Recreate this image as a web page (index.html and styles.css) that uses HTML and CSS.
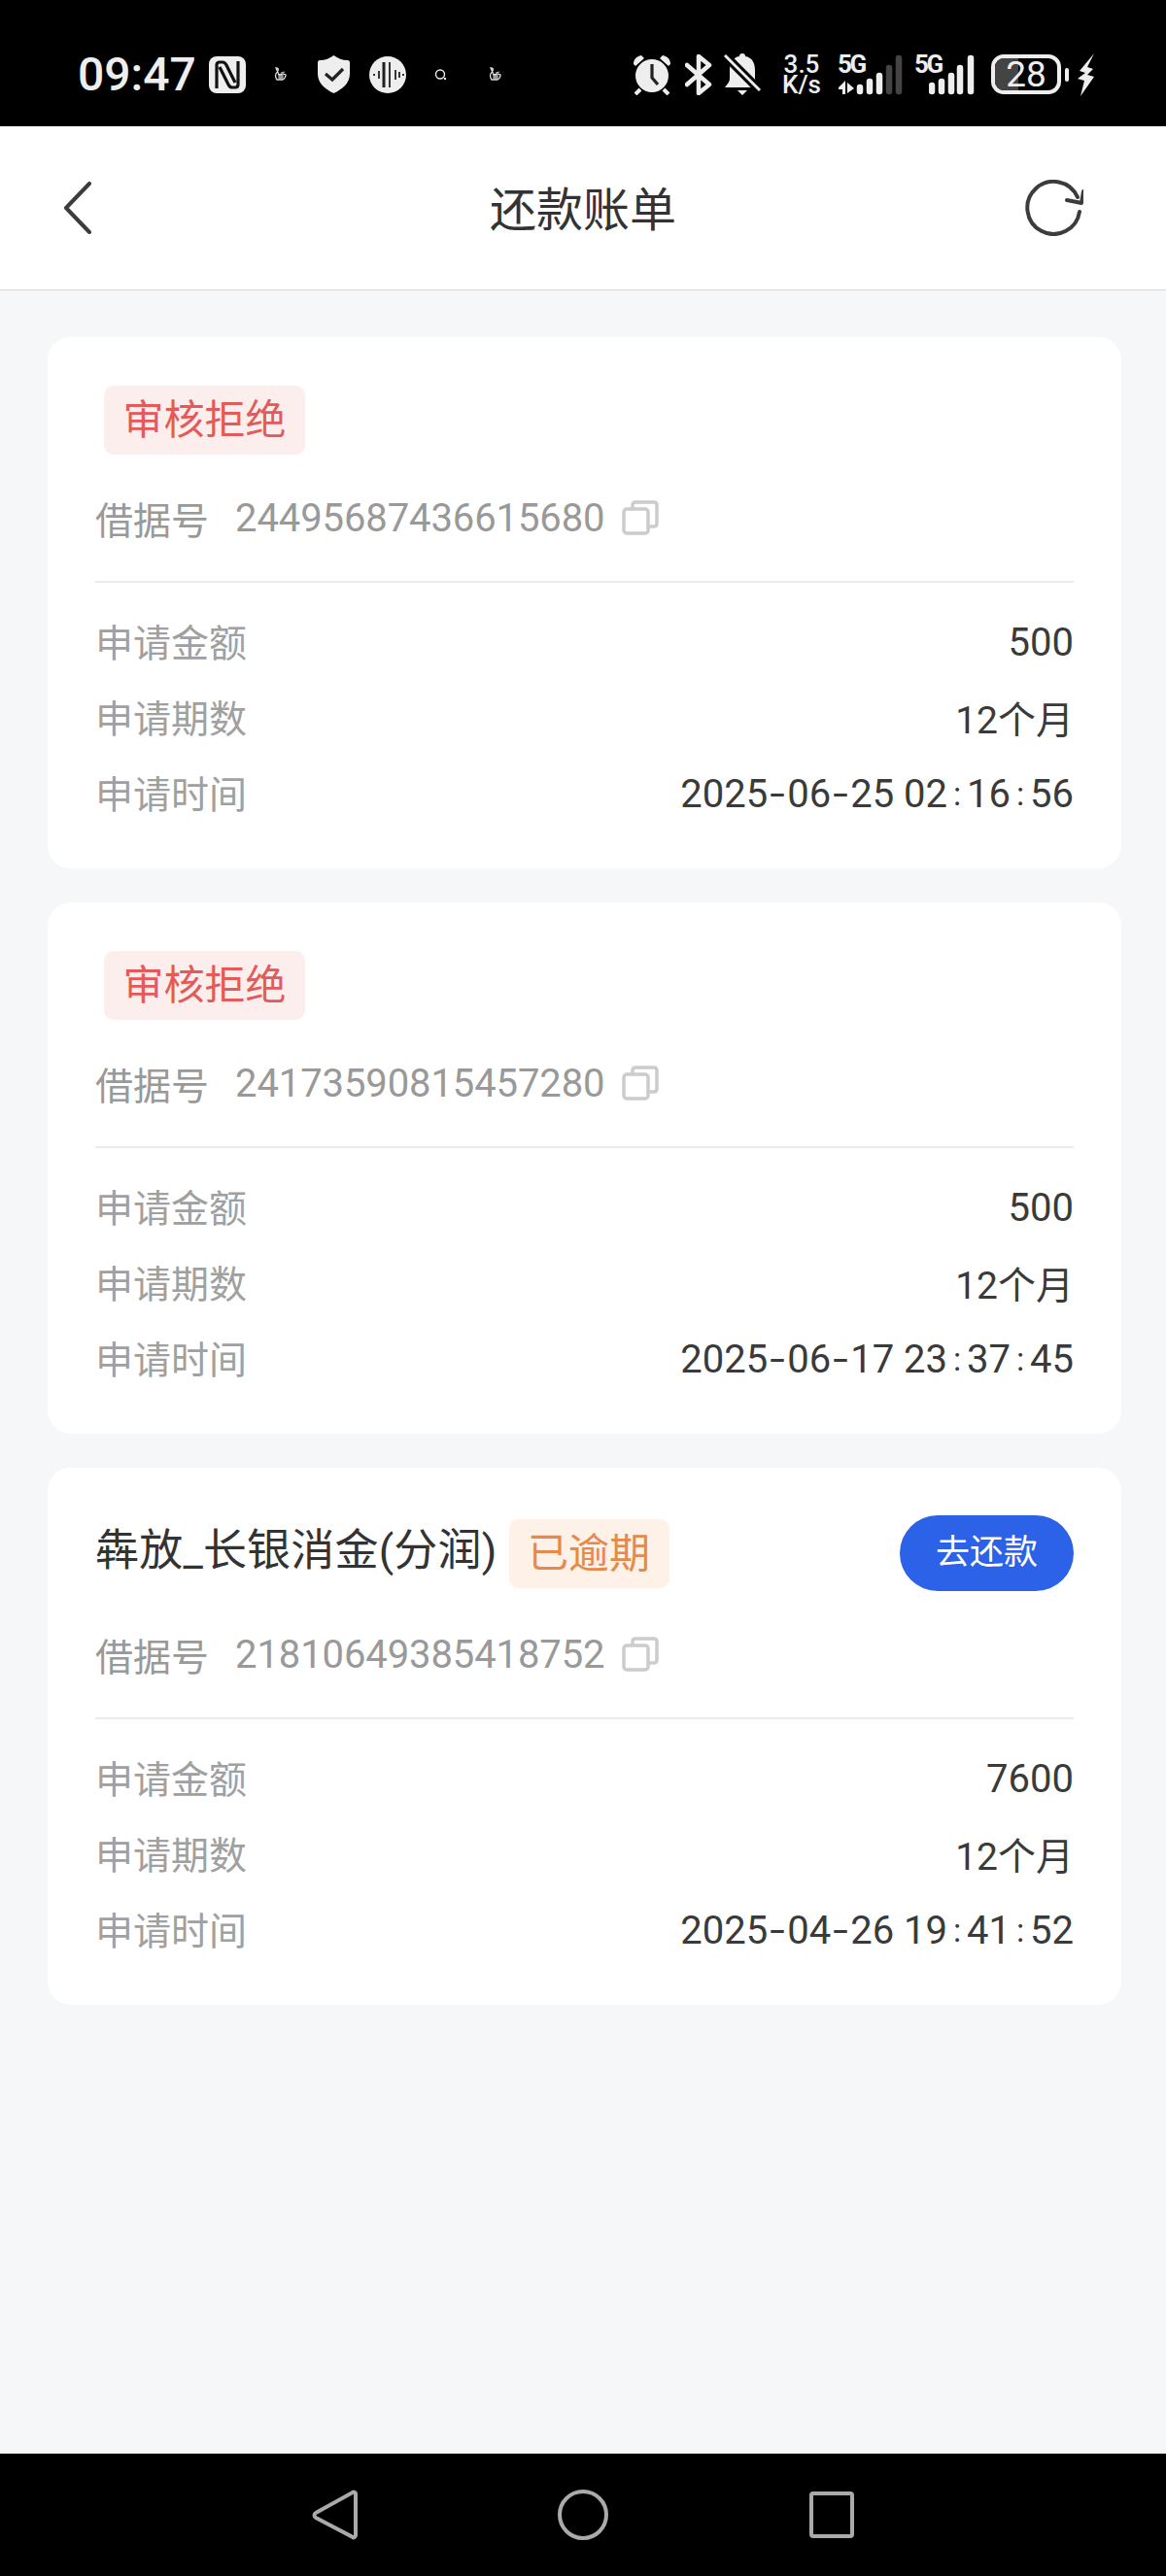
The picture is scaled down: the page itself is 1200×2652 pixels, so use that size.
FILE: index.html
```html
<!DOCTYPE html>
<html lang="zh-CN">

<head>
	<meta charset="UTF-8">
	<meta name="viewport" content="width=device-width, initial-scale=1.0">
	<title>还款账单</title>
	<link rel="stylesheet" href="styles.css">
</head>

<body>
	<div id="statusbar">
		<div class="status-left">
			<span class="clock">09:47</span>
			<svg class="ic-nfc" width="38" height="38" viewBox="0 0 38 38"><rect width="38" height="38" rx="8" fill="#eee"/><path d="M8 33V9c0-2 1-3 3-3h3c2 0 3 1 4 3l9 18M30 5v24c0 2-1 3-3 3h-3c-2 0-3-1-4-3L11 11" stroke="#111" stroke-width="3.200" fill="none"/></svg>
			<svg class="ic-tiny-a" width="15" height="16" viewBox="0 0 15 16"><path d="M3 1c2 0 3 1 2 3L3 7c-1 2 0 5 1 6h6c2-1 3-3 3-5l-3-1-4 1z" fill="none" stroke="#ddd" stroke-width="1.300"/><path d="M5 9h6M5 11h6M7 8v5M9 8v5M8 6l4-1" stroke="#ddd" stroke-width=".9"/></svg>
			<svg class="ic-shield" width="33" height="39" viewBox="0 0 33 39"><path d="M16.500 0c4 3 9 5 14 5 2 0 2.500 1 2.500 3v11c0 10-8 16-16.500 20C8 35 0 29 0 19V8c0-2 .5-3 2.500-3 5 0 10-2 14-5z" fill="#eee"/><path d="M8 19l7 6 11-11" stroke="#222" stroke-width="3.200" fill="none"/></svg>
			<svg class="ic-wave" width="38" height="38" viewBox="0 0 38 38"><circle cx="19" cy="19" r="19" fill="#eee"/><path d="M5 18v2M10 15v8M21 6v26M27 14v10M31 16v6M35 18v2" stroke="#222" stroke-width="1.800" fill="none"/><path d="M15 6v26" stroke="#222" stroke-width="3" fill="none"/></svg>
			<svg class="ic-tiny-b" width="13" height="12" viewBox="0 0 13 12"><circle cx="6" cy="5.500" r="4.500" fill="none" stroke="#eee" stroke-width="1.400"/><circle cx="11" cy="10" r="1.200" fill="#eee"/></svg>
			<svg class="ic-tiny-c" width="15" height="16" viewBox="0 0 15 16"><path d="M3 1c2 0 3 1 2 3L3 7c-1 2 0 5 1 6h6c2-1 3-3 3-5l-3-1-4 1z" fill="none" stroke="#ddd" stroke-width="1.300"/><path d="M5 9h6M5 11h6M7 8v5M9 8v5M8 6l4-1" stroke="#ddd" stroke-width=".9"/></svg>
		</div>
		<div class="status-right">
			<svg class="ic-alarm" width="40" height="42" viewBox="0 0 40 42"><circle cx="20" cy="22" r="17" fill="#eee"/><path d="M1 10C1 5 4 2 9 1l3 3-9 8zM39 10c0-5-3-8-8-9l-3 3 9 8z" fill="#eee"/><path d="M8 36l-5 5M32 36l5 5" stroke="#eee" stroke-width="4" fill="none"/><path d="M20 10v14l6 7" stroke="#222" stroke-width="3.200" fill="none"/></svg>
			<svg class="ic-bt" width="28" height="42" viewBox="0 0 28 42"><path d="M2 11l23 20-11 9V2l11 9L2 31" stroke="#eee" stroke-width="4.500" fill="none" stroke-linejoin="round" stroke-linecap="round"/></svg>
			<svg class="ic-bell" width="38" height="44" viewBox="0 0 38 44"><path d="M19 0c2 0 3 1 3 3 7 1 10 7 10 14v9c0 3 2 5 5 9H1c3-4 5-6 5-9V17C6 10 9 4 16 3c0-2 1-3 3-3zM14 38h10l-5 5z" fill="#eee"/><path d="M1 2l36 36" stroke="#000" stroke-width="9"/><path d="M1 2l36 36" stroke="#eee" stroke-width="3"/></svg>
			<div class="speed"><span>3.5</span><span>K/s</span></div>
			<div class="net">
				<span class="net-label">5G</span>
				<svg width="67" height="42" viewBox="0 0 67 42"><path d="M8 27v14H5v-5H1v-2zM10 29l7 6-7 5z" fill="#eee"/><path d="M23 34v4M33 28v10M43 22v16" stroke="#eee" stroke-width="6.500" stroke-linecap="round"/><path d="M53 14v24M63 4v34" stroke="#444" stroke-width="6.500" stroke-linecap="round"/></svg>
			</div>
			<div class="net net-b">
				<span class="net-label">5G</span>
				<svg width="47" height="42" viewBox="0 0 47 42"><path d="M3 32v6M13 28v10M23 22v16M32 14v24M43 4v34" stroke="#eee" stroke-width="6.500" stroke-linecap="round"/></svg>
			</div>
			<div class="battery"><span class="battery-fill"></span><span class="battery-num">28</span></div>
			<span class="battery-tip"></span>
			<svg class="ic-bolt" width="19" height="44" viewBox="0 0 19 44"><path d="M18 0 3 18l6 2-8 6 7 2-4 16 14-20-7-2 6-6-6-2z" fill="#eee"/></svg>
		</div>
	</div>

	<header id="topbar">
		<svg width="30" height="54" viewBox="0 0 30 54"><path d="M27 2 3 27l24 25" stroke="#3c3c3c" stroke-width="4" fill="none" stroke-linecap="round" stroke-linejoin="round"/></svg>
		<h1>还款账单</h1>
		<svg class="refresh" width="60" height="58" viewBox="0 0 60 58"><path d="M56 33A27 27 0 1 1 54 18" stroke="#3c3c3c" stroke-width="4" fill="none" stroke-linecap="round"/><path d="M60 12 58 24 43 21" stroke="#3c3c3c" stroke-width="4" fill="none" stroke-linecap="round" stroke-linejoin="round"/></svg>
	</header>

	<main>
		<section class="card">
			<div class="card-head"><span class="tag tag-red">审核拒绝</span></div>
			<div class="loan-no">
				<span class="loan-label">借据号</span>
				<span class="loan-num">24495687436615680</span>
				<svg width="38" height="36" viewBox="0 0 38 36"><rect x="2" y="9" width="25" height="25" rx="3" fill="#fff" stroke="#ccc" stroke-width="3.500"/><path d="M11 9V5c0-2 1-3 3-3h19c2 0 3 1 3 3v19c0 2-1 3-3 3h-6" fill="none" stroke="#ccc" stroke-width="3.500"/></svg>
			</div>
			<div class="rows">
				<div class="row"><span>申请金额</span><b>500</b></div>
				<div class="row"><span>申请期数</span><b class="term">12个月</b></div>
				<div class="row"><span>申请时间</span><b>2025<i class="dash">-</i>06<i class="dash">-</i>25 02<i class="colon">:</i>16<i class="colon">:</i>56</b></div>
			</div>
		</section>

		<section class="card">
			<div class="card-head"><span class="tag tag-red">审核拒绝</span></div>
			<div class="loan-no">
				<span class="loan-label">借据号</span>
				<span class="loan-num">24173590815457280</span>
				<svg width="38" height="36" viewBox="0 0 38 36"><rect x="2" y="9" width="25" height="25" rx="3" fill="#fff" stroke="#ccc" stroke-width="3.500"/><path d="M11 9V5c0-2 1-3 3-3h19c2 0 3 1 3 3v19c0 2-1 3-3 3h-6" fill="none" stroke="#ccc" stroke-width="3.500"/></svg>
			</div>
			<div class="rows">
				<div class="row"><span>申请金额</span><b>500</b></div>
				<div class="row"><span>申请期数</span><b class="term">12个月</b></div>
				<div class="row"><span>申请时间</span><b>2025<i class="dash">-</i>06<i class="dash">-</i>17 23<i class="colon">:</i>37<i class="colon">:</i>45</b></div>
			</div>
		</section>

		<section class="card card-due">
			<div class="card-head">
				<span class="card-title">犇放_长银消金(分润)</span>
				<span class="tag tag-orange">已逾期</span>
				<span class="pay-btn">去还款</span>
			</div>
			<div class="loan-no">
				<span class="loan-label">借据号</span>
				<span class="loan-num">21810649385418752</span>
				<svg width="38" height="36" viewBox="0 0 38 36"><rect x="2" y="9" width="25" height="25" rx="3" fill="#fff" stroke="#ccc" stroke-width="3.500"/><path d="M11 9V5c0-2 1-3 3-3h19c2 0 3 1 3 3v19c0 2-1 3-3 3h-6" fill="none" stroke="#ccc" stroke-width="3.500"/></svg>
			</div>
			<div class="rows">
				<div class="row"><span>申请金额</span><b>7600</b></div>
				<div class="row"><span>申请期数</span><b class="term">12个月</b></div>
				<div class="row"><span>申请时间</span><b>2025<i class="dash">-</i>04<i class="dash">-</i>26 19<i class="colon">:</i>41<i class="colon">:</i>52</b></div>
			</div>
		</section>
	</main>

	<nav id="navbar">
		<svg width="52" height="52" viewBox="0 0 52 52"><path d="M44 3c1-1 3 0 3 1v43c0 2-2 3-3 2L6 29c-2-1-2-4 0-5z" fill="none" stroke="#aaa" stroke-width="4"/></svg>
		<svg width="52" height="52" viewBox="0 0 52 52"><circle cx="26" cy="26" r="24" fill="none" stroke="#aaa" stroke-width="4"/></svg>
		<svg class="nav-square" width="46" height="48" viewBox="0 0 46 48"><rect x="2" y="2" width="42" height="44" rx="2" fill="none" stroke="#aaa" stroke-width="4"/></svg>
	</nav>
</body>

</html>
```

FILE: styles.css
```css
* {
	margin: 0;
	padding: 0;
	box-sizing: border-box;
}

body {
	width: 1200px;
	height: 2652px;
	display: flex;
	flex-direction: column;
	background-color: #f6f7f9;
	font-family: "Roboto", "Noto Sans CJK SC", sans-serif;
	overflow: hidden;
}

/* status bar */
#statusbar {
	height: 130px;
	flex: none;
	background-color: #000;
	color: #eee;
	display: flex;
	justify-content: space-between;
	align-items: center;
	padding: 23px 73px 0 80px;
}

.status-left,
.status-right {
	display: flex;
	align-items: center;
}

.clock {
	font-size: 48px;
	font-weight: 500;
	line-height: 40px;
}

.ic-nfc { margin-left: 13px; }
.ic-tiny-a { margin-left: 28px; }
.ic-shield { margin-left: 31px; }
.ic-wave { margin-left: 20px; }
.ic-tiny-b { margin-left: 29px; }
.ic-tiny-c { margin-left: 42px; }

.ic-bt { margin-left: 14px; }
.ic-bell { margin-left: 12px; }

.speed {
	margin-left: 21px;
	width: 42px;
	display: flex;
	flex-direction: column;
	align-items: center;
	font-size: 26px;
	font-weight: 500;
}

.speed span {
	display: block;
	height: 21px;
	line-height: 21px;
}

.net {
	margin-left: 16px;
	position: relative;
	width: 67px;
	height: 42px;
}

.net-b {
	margin-left: 12px;
	width: 62px;
}

.net svg {
	position: absolute;
	right: 0;
	top: 0;
}

.net-label {
	position: absolute;
	left: 0;
	top: 0;
	font-size: 26px;
	font-weight: 700;
	line-height: 20px;
	letter-spacing: -2.500px;
}

.battery {
	margin-left: 17px;
	width: 72px;
	height: 41px;
	border: 4px solid #eee;
	border-radius: 13px;
	position: relative;
	overflow: hidden;
}

.battery-fill {
	display: block;
	height: 100%;
	width: 24px;
	background-color: #444;
}

.battery-num {
	position: absolute;
	left: 0;
	right: 0;
	top: 0;
	text-align: center;
	font-size: 37px;
	line-height: 34px;
}

.battery-tip {
	margin-left: 4px;
	width: 4px;
	height: 14px;
	border-radius: 2px;
	background-color: #eee;
}

.ic-bolt { margin-left: 8px; }

/* top bar */
#topbar {
	height: 169px;
	flex: none;
	background-color: #fff;
	border-bottom: 1px solid #d8d8d8;
	display: grid;
	grid-template-columns: 1fr auto 1fr;
	align-items: center;
	padding: 0 65px;
}

#topbar h1 {
	font-size: 48px;
	font-weight: 400;
	color: #333;
	margin-bottom: 5px;
}

.refresh {
	justify-self: end;
	margin-right: 20px;
}

/* cards */
main {
	flex: 1;
	padding: 48px 46px 0 49px;
}

.card {
	background-color: #fff;
	border-radius: 24px;
	padding: 50px 49px 38px;
	margin-bottom: 35px;
}

.card-due {
	padding-top: 49px;
}

.card-head {
	display: flex;
	align-items: center;
}

.tag {
	height: 71px;
	padding: 0 19.500px;
	border-radius: 10px;
	font-size: 42px;
	line-height: 71px;
}

.tag-red {
	margin-left: 9px;
	background-color: #fdeeee;
	color: #e25a5a;
}

.tag-orange {
	margin-left: 12px;
	background-color: #fdf1e8;
	color: #e58a4c;
}

.card-title {
	font-size: 45px;
	line-height: 70px;
	margin-bottom: 4px;
	letter-spacing: 0.200px;
	color: #333;
}

.pay-btn {
	margin-left: auto;
	width: 179px;
	height: 78px;
	border-radius: 39px;
	background-color: #2b62e8;
	color: #fff;
	font-size: 35px;
	line-height: 78px;
	text-align: center;
}

.loan-no {
	margin-top: 35px;
	height: 60px;
	display: flex;
	align-items: center;
	color: #999;
}

.loan-label {
	font-size: 39px;
	width: 144px;
}

.loan-num {
	font-size: 40px;
	letter-spacing: -0.100px;
}

.loan-no svg {
	margin-left: 18px;
}

.rows {
	margin-top: 35px;
	padding-top: 22px;
	border-top: 2px solid #ebebeb;
}

.row {
	height: 78px;
	display: flex;
	align-items: center;
	justify-content: space-between;
	font-size: 39px;
	color: #a0a0a0;
}

.row span {
	margin-bottom: 5px;
}

.row b {
	font-size: 40px;
	font-weight: 400;
	color: #3a3a3a;
}

.row .term {
	font-size: 39px;
	margin-bottom: 3px;
}

/* date separators are as wide as digits in the original font */
.row i {
	display: inline-block;
	width: 20px;
	font-style: normal;
	text-align: center;
}

.row .dash {
	transform: scaleX(1.400);
}

.row .colon {
	font-size: 34px;
	vertical-align: 2px;
}

/* bottom nav */
#navbar {
	height: 126px;
	flex: none;
	background-color: #000;
	display: flex;
	align-items: center;
	gap: 203px;
	padding-left: 319px;
}

.nav-square {
	margin-left: 4px;
}
```
